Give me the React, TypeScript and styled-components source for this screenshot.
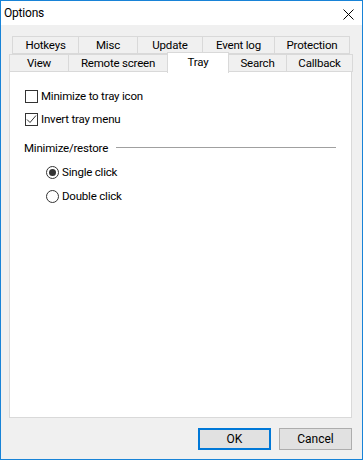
import * as React from 'react';
import styled, { createGlobalStyle } from 'styled-components';

const GlobalStyle = createGlobalStyle`
  html, body {
    margin: 0;
    padding: 0;
    background: #ffffff;
  }
  * {
    box-sizing: border-box;
  }
`;

const COLORS = {
  frame: '#1883d7',
  face: '#f0f0f0',
  tabBorder: '#d9d9d9',
  text: '#000000',
  control: '#333333',
  button: '#e1e1e1',
  buttonBorder: '#adadad',
  focus: '#0078d7',
  line: '#a0a0a0',
};

const topRow = [
  { label: 'Hotkeys', width: 66 },
  { label: 'Misc', width: 59 },
  { label: 'Update', width: 65 },
  { label: 'Event log', width: 72 },
  { label: 'Protection', width: 75 },
];

const bottomRow = [
  { label: 'View', width: 59 },
  { label: 'Remote screen', width: 99 },
  { label: 'Tray', width: 61, active: true },
  { label: 'Search', width: 58 },
  { label: 'Callback', width: 66 },
];

const StyledWindow = styled.div`
  width: 363px;
  height: 460px;
  display: flex;
  flex-direction: column;
  border: 1px solid ${COLORS.frame};
  font-family: Roboto, 'Liberation Sans', sans-serif;
  font-size: 11.5px;
  letter-spacing: -0.2px;
  color: ${COLORS.text};
`;

const StyledTitleBar = styled.div`
  height: 24px;
  flex-shrink: 0;
  display: flex;
  align-items: center;
  justify-content: space-between;
  padding: 0 8px 0 3px;
  background: #ffffff;
`;

const StyledTitle = styled.span`
  font-size: 12px;
`;

const StyledCloseIcon = styled.svg`
  width: 11px;
  height: 11px;
  margin-top: 3px;
`;

const StyledBody = styled.div`
  flex: 1;
  display: flex;
  flex-direction: column;
  background: ${COLORS.face};
  padding: 11px 10px 9px 8px;
`;

const StyledTabStrip = styled.div`
  display: flex;
  flex-direction: column;
`;

const StyledTabRow = styled.div<{ $inset: number }>`
  display: flex;
  height: 18px;
  padding: 0 ${(p) => p.$inset}px;
`;

const StyledTab = styled.div<{ $active?: boolean }>`
  display: flex;
  align-items: center;
  justify-content: center;
  height: ${(p) => (p.$active ? '21px' : '18px')};
  margin-top: ${(p) => (p.$active ? '-2px' : '0')};
  margin-left: -1px;
  border: 1px solid ${COLORS.tabBorder};
  border-bottom: ${(p) => (p.$active ? 'none' : `1px solid ${COLORS.tabBorder}`)};
  background: ${(p) => (p.$active ? '#ffffff' : COLORS.face)};
  position: relative;
  z-index: ${(p) => (p.$active ? 2 : 1)};
  padding-bottom: ${(p) => (p.$active ? '3px' : '0')};
  flex-shrink: 0;

  &:first-child {
    margin-left: 0;
  }
`;

const StyledPanel = styled.div`
  flex: 1;
  margin-top: -1px;
  background: #ffffff;
  border: 1px solid ${COLORS.tabBorder};
  padding: 18px 15px 0 15px;
  display: flex;
  flex-direction: column;
`;

const StyledOptionList = styled.div<{ $indent: number; $gap: number }>`
  display: flex;
  flex-direction: column;
  gap: ${(p) => p.$gap}px;
  padding-left: ${(p) => p.$indent}px;
`;

const StyledOption = styled.label`
  display: flex;
  align-items: center;
  gap: 3px;
  height: 13px;
  line-height: 13px;
`;

const StyledCheckBox = styled.span`
  width: 13px;
  height: 13px;
  border: 1px solid ${COLORS.control};
  background: #ffffff;
  display: flex;
  align-items: center;
  justify-content: center;
  flex-shrink: 0;
`;

const StyledRadio = styled.span<{ $checked?: boolean }>`
  width: 13px;
  height: 13px;
  border: 1px solid ${COLORS.control};
  border-radius: 50%;
  background: #ffffff;
  display: flex;
  align-items: center;
  justify-content: center;
  flex-shrink: 0;

  &::after {
    content: '';
    width: 7px;
    height: 7px;
    border-radius: 50%;
    background: ${(p) => (p.$checked ? COLORS.control : 'transparent')};
  }
`;

const StyledGroupHeader = styled.div`
  display: flex;
  align-items: center;
  gap: 8px;
  margin: 15px 0 11px -1px;
  height: 14px;
`;

const StyledGroupLine = styled.div`
  flex: 1;
  height: 1px;
  margin-top: -1px;
  background: ${COLORS.line};
`;

const StyledButtonBar = styled.div`
  display: flex;
  justify-content: flex-end;
  gap: 8px;
  margin-top: 10px;
`;

const StyledButton = styled.button<{ $default?: boolean }>`
  width: 73px;
  height: 22px;
  padding: 0;
  font: inherit;
  font-size: 12px;
  color: ${COLORS.text};
  background: ${COLORS.button};
  border: ${(p) => (p.$default ? `2px solid ${COLORS.focus}` : `1px solid ${COLORS.buttonBorder}`)};
`;

const CheckMark = () => (
  <svg width="11" height="11" viewBox="0 0 11 11">
    <path d="M1 5.5 L4 8.5 L10 1.5" fill="none" stroke={COLORS.control} strokeWidth="1" />
  </svg>
);

export default function App() {
  return (
    <>
      <GlobalStyle />
      <StyledWindow>
        <StyledTitleBar>
          <StyledTitle>Options</StyledTitle>
          <StyledCloseIcon viewBox="0 0 11 11">
            <path d="M0.5 0.5 L10.5 10.5 M10.5 0.5 L0.5 10.5" stroke="#000" strokeWidth="1" />
          </StyledCloseIcon>
        </StyledTitleBar>
        <StyledBody>
          <StyledTabStrip>
            <StyledTabRow $inset={3}>
              {topRow.map((t) => (
                <StyledTab key={t.label} style={{ width: t.width + 1 }}>
                  {t.label}
                </StyledTab>
              ))}
            </StyledTabRow>
            <StyledTabRow $inset={0}>
              {bottomRow.map((t) => (
                <StyledTab key={t.label} $active={t.active} style={{ width: t.width + 1 }}>
                  {t.label}
                </StyledTab>
              ))}
            </StyledTabRow>
          </StyledTabStrip>
          <StyledPanel>
            <StyledOptionList $indent={0} $gap={10}>
              <StyledOption>
                <StyledCheckBox />
                Minimize to tray icon
              </StyledOption>
              <StyledOption>
                <StyledCheckBox>
                  <CheckMark />
                </StyledCheckBox>
                Invert tray menu
              </StyledOption>
            </StyledOptionList>
            <StyledGroupHeader>
              Minimize/restore
              <StyledGroupLine />
            </StyledGroupHeader>
            <StyledOptionList $indent={21} $gap={11}>
              <StyledOption>
                <StyledRadio $checked />
                Single click
              </StyledOption>
              <StyledOption>
                <StyledRadio />
                Double click
              </StyledOption>
            </StyledOptionList>
          </StyledPanel>
          <StyledButtonBar>
            <StyledButton $default>OK</StyledButton>
            <StyledButton>Cancel</StyledButton>
          </StyledButtonBar>
        </StyledBody>
      </StyledWindow>
    </>
  );
}
